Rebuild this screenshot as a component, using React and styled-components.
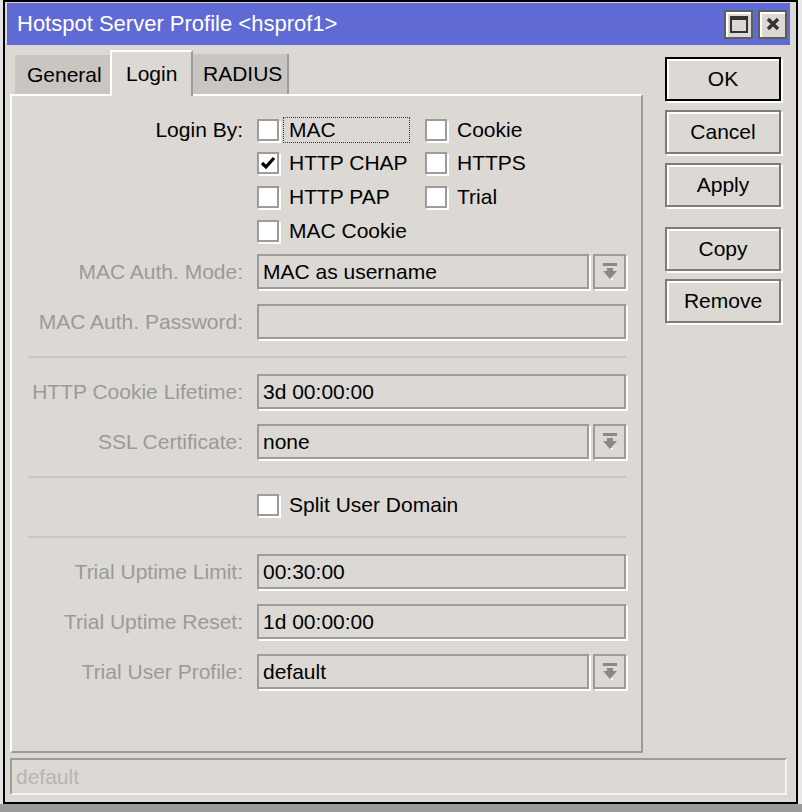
import styled, { createGlobalStyle } from "styled-components";

const FACE = "#dcd9d4";
const EDGE = "#9c9c9c";

const Global = createGlobalStyle`
  body {
    margin: 0;
    background: #9a9a9a;
    overflow: hidden;
    font-family: "Liberation Sans", Arial, sans-serif;
  }
  * { box-sizing: border-box; }
`;

const Desktop = styled.div`
  width: 802px;
  height: 812px;
  display: flex;
  flex-direction: column;
`;
const Screen = styled.div`
  height: 804px;
  display: flex;
  background: linear-gradient(90deg, #e4e4e4 0 3px, transparent 3px 798px, #e9e9e9 798px);
`;
const Window = styled.div`
  margin-left: 3px;
  width: 795px;
  height: 804px;
  border: 2px solid #000;
  background: ${FACE};
  display: flex;
  flex-direction: column;
`;
const TitleBar = styled.div`
  height: 42px;
  margin: 1px 6px 0 2px;
  background: #606ad4;
  display: flex;
  align-items: center;
  padding: 0 3px 0 10px;
`;
const Title = styled.div`
  flex: 1;
  color: #fff;
  font-size: 22px;
`;
const TitleBtn = styled.div`
  width: 29px;
  height: 29px;
  margin-left: 5px;
  border: 2px solid #5e5e5e;
  box-shadow: inset 2px 2px 0 #fff;
  background: ${FACE};
  display: flex;
  align-items: center;
  justify-content: center;
`;
const Main = styled.div`
  display: flex;
  height: 708px;
`;
const Left = styled.div`
  width: 638px;
  padding-left: 5px;
  display: flex;
  flex-direction: column;
`;
const Tabs = styled.div`
  display: flex;
  align-items: flex-end;
  height: 49px;
  padding-left: 5px;
`;
const Tab = styled.div`
  width: ${(p) => p.$w}px;
  height: ${(p) => (p.$active ? 46 : p.$h)}px;
  padding-left: ${(p) => p.$pl}px;
  font-size: 21px;
  color: #000;
  display: flex;
  align-items: center;
  background: ${(p) => (p.$active ? FACE : "#c9c6c1")};
  border-top: ${(p) => (p.$active ? "2px solid #fff" : "none")};
  border-left: ${(p) => (p.$active ? "2px solid #fff" : "none")};
  border-right: ${(p) => (p.$edge ? `2px solid ${EDGE}` : "none")};
  margin-bottom: ${(p) => (p.$active ? -2 : 0)}px;
  position: relative;
  z-index: 1;
`;
const Panel = styled.div`
  height: 659px;
  border-top: 2px solid #fff;
  border-left: 2px solid #fff;
  border-right: 2px solid ${EDGE};
  border-bottom: 2px solid ${EDGE};
  padding-top: 16px;
  display: flex;
  flex-direction: column;
`;
const Row = styled.div`
  display: grid;
  grid-template-columns: 231px 369px;
  column-gap: 14px;
  height: ${(p) => p.$h}px;
  align-items: ${(p) => (p.$field ? "start" : "center")};
  padding-top: ${(p) => (p.$field ? 6 : 0)}px;
`;
const Label = styled.div`
  text-align: right;
  font-size: 21px;
  line-height: 35px;
  white-space: nowrap;
  color: ${(p) => (p.$dim ? "#9a9a9a" : "#000")};
`;
const Checks = styled.div`
  display: flex;
`;
const CheckItem = styled.div`
  display: flex;
  align-items: center;
  gap: 4px;
  width: ${(p) => (p.$w ? `${p.$w}px` : "auto")};
`;
const Box = styled.div`
  width: 22px;
  height: 22px;
  flex: none;
  background: #fff;
  border: 2px solid ${EDGE};
  box-shadow: 2px 2px 0 #fff;
  display: flex;
  align-items: center;
  justify-content: center;
`;
const CheckText = styled.div`
  height: 26px;
  width: ${(p) => (p.$focus ? "127px" : "auto")};
  border: 1px dotted ${(p) => (p.$focus ? "#333" : "transparent")};
  padding-left: 5px;
  font-size: 21px;
  line-height: 24px;
  white-space: nowrap;
`;
const FieldWrap = styled.div`
  display: flex;
  gap: 4px;
`;
const Field = styled.div`
  flex: 1;
  height: 35px;
  border: 2px solid ${EDGE};
  box-shadow: 2px 2px 0 #fff;
  padding-left: 4px;
  font-size: 21px;
  line-height: 31px;
  color: #000;
  white-space: nowrap;
`;
const DropBtn = styled.div`
  width: 33px;
  height: 35px;
  border: 2px solid ${EDGE};
  box-shadow: 2px 2px 0 #fff;
  display: flex;
  align-items: center;
  justify-content: center;
`;
const Separator = styled.div`
  height: 2px;
  background: #c8c6c0;
  margin: ${(p) => p.$top || 8}px 15px 10px 16px;
`;
const Side = styled.div`
  width: 116px;
  margin: 12px 0 0 22px;
  display: flex;
  flex-direction: column;
`;
const Button = styled.div`
  height: 44px;
  margin-top: ${(p) => p.$gap || 0}px;
  border: 2px solid ${(p) => (p.$default ? "#000" : "#7c7c7c")};
  box-shadow: inset 2px 2px 0 #fff, 2px 2px 0 #fff;
  display: flex;
  align-items: center;
  justify-content: center;
  font-size: 21px;
  color: #000;
`;
const StatusBar = styled.div`
  height: 37px;
  margin: 5px 9px 0 5px;
  border-top: 2px solid ${EDGE};
  border-left: 2px solid ${EDGE};
  border-right: 2px solid #f2f2f2;
  border-bottom: 2px solid #f2f2f2;
  padding-left: 4px;
  font-size: 21px;
  line-height: 33px;
  color: #b5b5b5;
`;

const MaxIcon = () => (
  <svg width="18" height="17" viewBox="0 0 18 17">
    <rect x="1" y="1" width="16" height="15" fill="none" stroke="#333" strokeWidth="2" />
    <rect x="0" y="0" width="18" height="4" fill="#333" />
  </svg>
);
const CloseIcon = () => (
  <svg width="14" height="14" viewBox="0 0 14 14">
    <path d="M2 2 L12 12 M12 2 L2 12" stroke="#333" strokeWidth="3.5" />
  </svg>
);
const Tick = () => (
  <svg width="16" height="16" viewBox="0 0 16 16">
    <path d="M2 8 L6 12 L14 3" fill="none" stroke="#000" strokeWidth="3.2" />
  </svg>
);
const DropIcon = () => (
  <svg width="16" height="18" viewBox="0 0 16 18">
    <rect x="1" y="0" width="14" height="3" fill="#888" />
    <rect x="5" y="5" width="6" height="4" fill="#888" />
    <polygon points="1,8 15,8 8,16" fill="#888" />
    <rect x="9" y="15" width="2" height="2" fill="#fff" />
  </svg>
);

const Check = ({ label, checked, focus, w }) => (
  <CheckItem $w={w}>
    <Box>{checked && <Tick />}</Box>
    <CheckText $focus={focus}>{label}</CheckText>
  </CheckItem>
);

const TextRow = ({ label, value, drop }) => (
  <Row $h={50} $field>
    <Label $dim>{label}</Label>
    <FieldWrap>
      <Field>{value}</Field>
      {drop && (
        <DropBtn>
          <DropIcon />
        </DropBtn>
      )}
    </FieldWrap>
  </Row>
);

const loginBy = [
  [{ label: "MAC", focus: true }, { label: "Cookie" }],
  [{ label: "HTTP CHAP", checked: true }, { label: "HTTPS" }],
  [{ label: "HTTP PAP" }, { label: "Trial" }],
  [{ label: "MAC Cookie" }],
];

export default function App() {
  return (
    <>
      <Global />
      <Desktop>
        <Screen>
          <Window>
            <TitleBar>
              <Title>Hotspot Server Profile &lt;hsprof1&gt;</Title>
              <TitleBtn>
                <MaxIcon />
              </TitleBtn>
              <TitleBtn>
                <CloseIcon />
              </TitleBtn>
            </TitleBar>
            <Main>
              <Left>
                <Tabs>
                  <Tab $w={95} $h={39} $pl={12}>General</Tab>
                  <Tab $w={83} $pl={14} $active $edge>Login</Tab>
                  <Tab $w={96} $h={40} $pl={10} $edge>RADIUS</Tab>
                </Tabs>
                <Panel>
                  {loginBy.map((pair, i) => (
                    <Row key={i} $h={34}>
                      <Label>{i === 0 ? "Login By:" : ""}</Label>
                      <Checks>
                        {pair.map((c, j) => (
                          <Check key={c.label} {...c} w={j === 0 ? 168 : 0} />
                        ))}
                      </Checks>
                    </Row>
                  ))}
                  <TextRow label="MAC Auth. Mode:" value="MAC as username" drop />
                  <TextRow label="MAC Auth. Password:" value="" />
                  <Separator />
                  <TextRow label="HTTP Cookie Lifetime:" value="3d 00:00:00" />
                  <TextRow label="SSL Certificate:" value="none" drop />
                  <Separator />
                  <Row $h={34}>
                    <Label />
                    <Checks>
                      <Check label="Split User Domain" />
                    </Checks>
                  </Row>
                  <Separator $top={14} />
                  <TextRow label="Trial Uptime Limit:" value="00:30:00" />
                  <TextRow label="Trial Uptime Reset:" value="1d 00:00:00" />
                  <TextRow label="Trial User Profile:" value="default" drop />
                </Panel>
              </Left>
              <Side>
                <Button $default>OK</Button>
                <Button $gap={9}>Cancel</Button>
                <Button $gap={9}>Apply</Button>
                <Button $gap={20}>Copy</Button>
                <Button $gap={8}>Remove</Button>
              </Side>
            </Main>
            <StatusBar>default</StatusBar>
          </Window>
        </Screen>
      </Desktop>
    </>
  );
}
